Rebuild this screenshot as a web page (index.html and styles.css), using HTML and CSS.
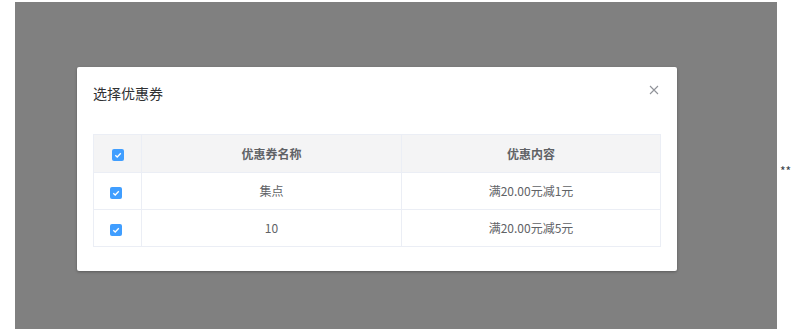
FILE: index.html
```html
<!DOCTYPE html>
<html lang="zh-CN">
<head>
<meta charset="utf-8">
<title>选择优惠券</title>
<link rel="stylesheet" href="styles.css">
</head>
<body>
<div class="page">
  <div class="mask">
    <div class="dialog">
      <div class="dialog-header">
        <span class="dialog-title">选择优惠券</span>
        <span class="dialog-close" aria-label="关闭">
          <svg width="10" height="10" viewBox="0 0 10 10"><path d="M1 1L9 9M9 1L1 9" stroke="#909399" stroke-width="1.1" fill="none"/></svg>
        </span>
      </div>
      <div class="dialog-body">
        <table class="coupon-table">
          <thead>
            <tr>
              <th class="col-check"><span class="checkbox head"><svg width="12" height="12" viewBox="0 0 12 12"><path d="M3.3 6.2L5.2 8L8.8 4.2" stroke="#fff" stroke-width="1.3" fill="none"/></svg></span></th>
              <th class="col-name">优惠券名称</th>
              <th class="col-content">优惠内容</th>
            </tr>
          </thead>
          <tbody>
            <tr>
              <td class="col-check"><span class="checkbox"><svg width="12" height="12" viewBox="0 0 12 12"><path d="M3.3 6.2L5.2 8L8.8 4.2" stroke="#fff" stroke-width="1.3" fill="none"/></svg></span></td>
              <td>集点</td>
              <td>满20.00元减1元</td>
            </tr>
            <tr>
              <td class="col-check"><span class="checkbox"><svg width="12" height="12" viewBox="0 0 12 12"><path d="M3.3 6.2L5.2 8L8.8 4.2" stroke="#fff" stroke-width="1.3" fill="none"/></svg></span></td>
              <td>10</td>
              <td>满20.00元减5元</td>
            </tr>
          </tbody>
        </table>
      </div>
    </div>
  </div>
  <div class="stars">**</div>
</div>
</body>
</html>
```
FILE: styles.css
```css
html, body {
  margin: 0;
  padding: 0;
  background: #ffffff;
  font-family: "Noto Sans CJK SC", "Noto Sans", sans-serif;
  overflow: hidden;
}
.page {
  display: flex;
  align-items: flex-start;
  width: 791px;
  height: 329px;
}
.mask {
  margin-left: 15px;
  margin-top: 2px;
  width: 762px;
  height: 327px;
  background: #808080;
  padding: 65px 0 0 62px;
  box-sizing: border-box;
  flex-shrink: 0;
}
.dialog {
  width: 600px;
  height: 204px;
  background: #ffffff;
  box-shadow: 0 1px 3px rgba(0, 0, 0, 0.3);
  border-radius: 2px;
  box-sizing: border-box;
}
.dialog-header {
  display: flex;
  justify-content: space-between;
  align-items: flex-start;
  padding: 16px 18px 11px 16px;
}
.dialog-title {
  font-size: 14px;
  line-height: 20px;
  color: #303133;
}
.dialog-close {
  display: block;
  width: 10px;
  height: 10px;
  margin-top: 2px;
}
.dialog-close svg { display: block; }
.dialog-body {
  padding: 20px 16px 0 16px;
}
.coupon-table {
  width: 568px;
  border-collapse: collapse;
  table-layout: fixed;
  font-size: 12px;
  color: #606266;
}
.coupon-table th,
.coupon-table td {
  border: 1px solid #ebeef5;
  text-align: center;
  padding: 0;
  line-height: 16px;
}
.coupon-table th {
  height: 37px;
  background: #f4f4f5;
  font-weight: bold;
  color: #606266;
}
.coupon-table td {
  height: 36px;
}
.col-check { width: 47px; }
.col-name { width: 259px; }
.coupon-table td.col-check { padding-right: 3px; }
.checkbox {
  display: inline-block;
  width: 12px;
  height: 12px;
  background: #409eff;
  border-radius: 2px;
  vertical-align: middle;
}
.checkbox svg { display: block; }
.stars {
  margin-left: 3px;
  margin-top: 164px;
  font-size: 12px;
  line-height: 14px;
  color: #3a3f4a;
  white-space: nowrap;
}
```
